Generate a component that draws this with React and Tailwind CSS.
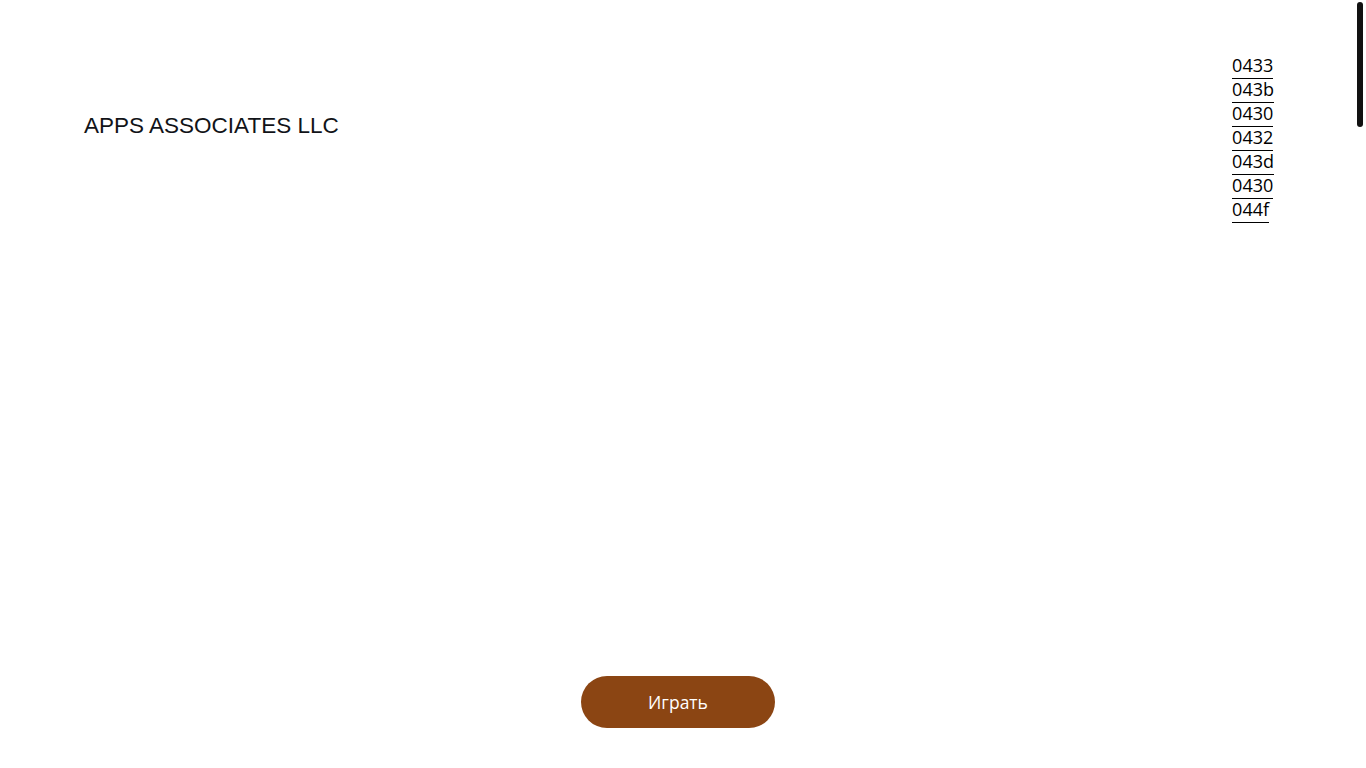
import React from 'react';

const codes = ['0433', '043b', '0430', '0432', '043d', '0430', '044f'];

const App = () => {
  return (
    <div className="relative h-[768px] bg-white overflow-hidden flex flex-col">
      <div className="flex justify-between pl-[84px] pr-[92px] pt-[55px]">
        <h1
          className="mt-[60px] text-[22.5px] leading-none text-[#111318]"
          style={{ fontFamily: '"Liberation Sans", Arial, sans-serif' }}
        >
          APPS ASSOCIATES LLC
        </h1>
        <ul
          className="flex flex-col items-start text-[18px] text-black"
          style={{ fontFamily: '"Open Sans", "DejaVu Sans", sans-serif' }}
        >
          {codes.map((c, i) => (
            <li key={i} className="h-[24px] leading-[21px] border-b border-black">
              {c}
            </li>
          ))}
        </ul>
      </div>
      <div className="flex-1" />
      <div className="flex justify-center pb-[40px] pr-[10px]">
        <button
          className="w-[194px] h-[52px] rounded-full bg-[#8b4513] text-white text-[17.5px]"
          style={{ fontFamily: '"Open Sans", "DejaVu Sans", sans-serif' }}
        >
          Играть
        </button>
      </div>
      <div className="absolute right-[3px] top-[2px] w-[6px] h-[125px] rounded-full bg-[#111]" />
    </div>
  );
};

export default App;
